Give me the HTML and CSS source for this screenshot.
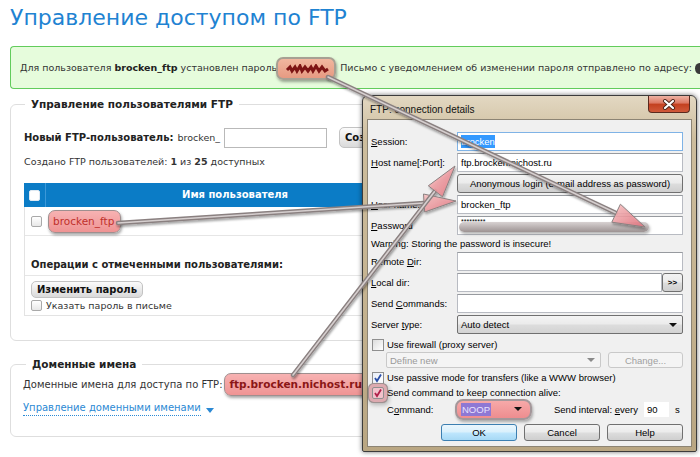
FILE: index.html
```html
<!DOCTYPE html>
<html>
<head>
<meta charset="utf-8">
<link rel="stylesheet" href="styles.css">
</head>
<body>
<div class="page">
  <h1 class="title">Управление доступом по FTP</h1>

  <div class="notice">Для пользователя <b>brocken_ftp</b> установлен пароль <span class="redact"><svg width="46" height="10" viewBox="0 0 46 10"><path d="M2 6 L5 3 L7 7 L10 3 L12 7 L15 2 L17 7 L20 3 L23 7 L26 3 L28 7 L31 2 L34 7 L37 3 L40 7 L43 5"/></svg></span> Письмо с уведомлением об изменении пароля отправлено по адресу: <span class="blob"></span></div>

  <fieldset class="box users">
    <legend>Управление пользователями FTP</legend>
    <div class="newuser">
      <b>Новый FTP-пользователь:</b><span class="prefix">brocken_</span><input class="txt" type="text"><button class="btn add">Создать</button>
    </div>
    <div class="count">Создано FTP пользователей: <b>1</b> из <b>25</b> доступных</div>
    <div class="grid">
      <div class="grid-head">
        <span class="cell-chk"><span class="cb"></span></span>
        <span class="cell-name">Имя пользователя</span>
      </div>
      <div class="grid-row">
        <span class="cell-chk"><span class="cb"></span></span>
        <span class="mark">brocken_ftp</span>
      </div>
      <div class="ops-title">Операции с отмеченными пользователями:</div>
      <div class="ops">
        <button class="btn">Изменить пароль</button>
        <label class="chk-line"><span class="cb"></span>Указать пароль в письме</label>
      </div>
    </div>
  </fieldset>

  <fieldset class="box domains">
    <legend>Доменные имена</legend>
    <div class="dom-line">Доменные имена для доступа по FTP:<span class="mark strong">ftp.brocken.nichost.ru</span></div>
    <div class="dom-link"><a class="dotted">Управление доменными именами</a><span class="caret"></span></div>
  </fieldset>

  <!-- putty-like dialog pasted over the page -->
  <div class="win">
    <div class="win-bar">
      <span class="win-title">FTP: connection details</span>
      <span class="close"><svg width="14" height="11" viewBox="0 0 14 11"><path d="M3 2 L11 9 M11 2 L3 9" stroke="#4b2318" stroke-width="4" stroke-linecap="round"/><path d="M3 2 L11 9 M11 2 L3 9" stroke="#fff" stroke-width="2.2" stroke-linecap="round"/></svg></span>
    </div>
    <div class="win-body">
      <div class="f-row"><span class="f-lbl"><u>S</u>ession:</span><span class="f-in focus"><span class="hl">brocken</span></span></div>
      <div class="f-row"><span class="f-lbl"><u>H</u>ost name[:Port]:</span><span class="f-in">ftp.brocken.nichost.ru</span></div>
      <div class="f-row"><span class="f-lbl"></span><span class="w-btn wide">Anonymous login (e-mail address as password)</span></div>
      <div class="f-row"><span class="f-lbl"><u>U</u>ser name:</span><span class="f-in">brocken_ftp</span></div>
      <div class="f-row"><span class="f-lbl"><u>P</u>assword</span><span class="f-in pass"><span class="stars">*********</span><span class="smudge"></span></span></div>
      <div class="warn">Warning: Storing the password is insecure!</div>
      <div class="f-row"><span class="f-lbl">Remote <u>D</u>ir:</span><span class="f-in"></span></div>
      <div class="f-row"><span class="f-lbl"><u>L</u>ocal dir:</span><span class="f-in"></span><span class="w-btn more">&gt;&gt;</span></div>
      <div class="f-row"><span class="f-lbl">Send <u>C</u>ommands:</span><span class="f-in"></span></div>
      <div class="f-row"><span class="f-lbl">Server <u>t</u>ype:</span><span class="f-sel">Auto detect<span class="dd"></span></span></div>
      <div class="cb-row fw"><span class="wcb"></span>Use firewall (proxy server)</div>
      <div class="sub-row">
        <span class="f-sel off">Define new<span class="dd"></span></span>
        <span class="w-btn off">Change...</span>
      </div>
      <div class="cb-row passive"><span class="wcb on"><svg width="10" height="10" viewBox="0 0 10 10"><path d="M2 5 L4 8 L8 1.5" fill="none" stroke="#2b4fa8" stroke-width="1.8"/></svg></span>Use passive mode for transfers (like a WWW browser)</div>
      <div class="cb-row"><span class="wcb on ring"><svg width="10" height="10" viewBox="0 0 10 10"><path d="M2 5 L4 8 L8 1.5" fill="none" stroke="#b0204a" stroke-width="1.8"/></svg></span>Send command to keep connection alive:</div>
      <div class="cmd-row">
        <span class="cmd-lbl">C<u>o</u>mmand:</span>
        <span class="noop"><span class="hl2">NOOP</span><span class="dd"></span></span>
        <span class="every">Send interval: <u>e</u>very</span>
        <span class="f-in num">90</span>
        <span class="unit">s</span>
      </div>
      <div class="btn-row">
        <span class="w-btn def">OK</span>
        <span class="w-btn">Cancel</span>
        <span class="w-btn">Help</span>
      </div>
    </div>
  </div>

  <svg class="notes" width="700" height="457" viewBox="0 0 700 457">
    <defs>
      <filter id="sh" x="-20%" y="-20%" width="140%" height="140%">
        <feDropShadow dx="1" dy="2" stdDeviation="1.3" flood-color="#000" flood-opacity="0.35"/>
      </filter>
      <linearGradient id="pink" x1="0" y1="0" x2="1" y2="1">
        <stop offset="0" stop-color="#f9c4c4"/>
        <stop offset="1" stop-color="#e5707c"/>
      </linearGradient>
    </defs>
    <g filter="url(#sh)">
      <line class="ln" x1="328" y1="77" x2="616" y2="213"/>
      <line class="ln-in" x1="328" y1="77" x2="616" y2="213"/>
      <polygon class="head" points="645,227 611.8,222.2 620.4,204.2"/>

      <line class="ln" x1="118" y1="223" x2="424" y2="203"/>
      <line class="ln-in" x1="118" y1="223" x2="424" y2="203"/>
      <polygon class="head" points="456,201 424.7,212 423.5,194"/>

      <line class="ln" x1="293" y1="375" x2="435" y2="191"/>
      <line class="ln-in" x1="293" y1="375" x2="435" y2="191"/>
      <polygon class="head" points="455,166 442.5,196.8 428.3,185.8"/>
    </g>
  </svg>
</div>
</body>
</html>
```

FILE: styles.css
```css
*{
    box-sizing: border-box;
}
html, body{
    margin: 0;
}
body{
    width: 700px;
    height: 457px;
    overflow: hidden;
    background: #ffffff;
    font-family: "DejaVu Sans", Verdana, sans-serif;
    font-size: 10px;
    color: #333333;
}
.page{
    position: relative;
    width: 700px;
    height: 457px;
    overflow: hidden;
    padding-left: 10px;
}
.title{
    margin: 0;
    padding-top: 3px;
    font-size: 22px;
    line-height: 30px;
    font-weight: normal;
    color: #1f83d2;
}
.notice{
    margin-top: 13px;
    width: 690px;
    height: 43px;
    line-height: 41px;
    padding: 0 0 0 9px;
    font-size: 9.5px;
    white-space: nowrap;
    overflow: hidden;
    background: #e6fcdc;
    border: 1px solid #62cc5c;
    border-right: none;
    border-radius: 4px 0 0 4px;
}
.notice b{
    color: #222;
}
.redact{
    display: inline-block;
    vertical-align: middle;
    width: 60px;
    height: 23px;
    margin: 0 1px 0 -4px;
    padding: 5px 0 0 7px;
    line-height: 10px;
    background: linear-gradient(#f1b79f, #e69a82);
    border: 2px solid #a7a093;
    border-radius: 7px;
    box-shadow: 1px 2px 3px rgba(0,0,0,.35);
}
.redact path{
    fill: none;
    stroke: #7d1414;
    stroke-width: 3;
}
.blob{
    display: inline-block;
    vertical-align: middle;
    width: 9px;
    height: 11px;
    border-radius: 50%;
    background: #3a3a3a;
}

/* fieldsets */
.box{
    margin: 0;
    width: 680px;
    min-inline-size: 0;
    border: 1px solid #dedede;
    border-radius: 6px;
}
.box legend{
    padding: 0 6px;
    font-size: 10.5px;
    line-height: 14px;
    font-weight: bold;
    color: #222222;
}
.users{
    margin-top: 8px;
    padding: 16px 0 24px 13px;
}
.users legend{
    margin-left: 1px;
}
.domains{
    margin-top: 16px;
    padding: 0 0 20px 12px;
}
.domains legend{
    margin-left: 3px;
}
.newuser{
    display: flex;
    align-items: center;
    height: 21px;
}
.newuser b{
    color: #222;
}
.prefix{
    margin-left: 4px;
    font-size: 9.5px;
}
.txt{
    width: 103px;
    height: 20px;
    margin: 0 0 0 4px;
    border: 1px solid #b9b9b9;
}
.btn{
    height: 17px;
    padding: 0 5px;
    font-family: inherit;
    font-size: 10px;
    font-weight: bold;
    color: #111;
    background: linear-gradient(#fbfbfb, #dadada);
    border: 1px solid #c3c3c3;
    border-radius: 5px;
}
.add{
    height: 21px;
    margin-left: 12px;
}
.count{
    margin-top: 7px;
    line-height: 14px;
    font-size: 9.5px;
}
.grid{
    width: 400px;
    margin-top: 14px;
    border: 1px solid #e3e3e3;
}
.grid-head{
    display: flex;
    height: 24px;
    margin: -1px -1px 0;
    background: #0b7cc6;
    color: #ffffff;
    font-weight: bold;
}
.cell-chk{
    display: flex;
    align-items: center;
    justify-content: center;
    width: 22px;
    flex: none;
}
.grid-head .cell-chk{
    border-right: 1px solid #3b98d8;
}
.cell-name{
    flex: 1;
    text-align: center;
    line-height: 24px;
}
.cb{
    display: inline-block;
    width: 11px;
    height: 11px;
    border: 1px solid #a9a9a9;
    border-radius: 2px;
    background: linear-gradient(#ffffff, #e8e8e8);
}
.grid-head .cb{
    background: #ffffff;
    border-color: #dfe9f2;
}
.grid-row{
    display: flex;
    align-items: center;
    height: 29px;
    border-bottom: 1px solid #e6e6e6;
}
.mark{
    display: inline-block;
    height: 23px;
    line-height: 21px;
    padding: 0 6px 0 4px;
    margin-left: 1px;
    font-size: 10.5px;
    color: #c0302b;
    background: linear-gradient(#f7b2b2, #ef9494);
    border: 1px solid #9f8f8f;
    border-radius: 7px;
    box-shadow: 1px 2px 3px rgba(0,0,0,.35);
}
.ops-title{
    padding: 22px 6px 3px;
    line-height: 14px;
    font-weight: bold;
    color: #222;
    border-bottom: 1px solid #e6e6e6;
}
.ops{
    padding: 5px 6px 3px;
}
.ops .btn{
    display: block;
}
.chk-line{
    display: flex;
    align-items: center;
    gap: 4px;
    height: 14px;
    font-size: 9.5px;
}
.dom-line{
    display: flex;
    align-items: center;
    height: 23px;
    margin-top: 2px;
}
.mark.strong{
    margin-left: 1px;
    padding: 0 6px 0 5px;
    font-size: 10.5px;
    font-weight: bold;
    color: #8b1616;
}
.dom-link{
    display: flex;
    align-items: center;
    margin-top: 5px;
    line-height: 14px;
}
.dotted{
    color: #2b89d4;
    border-bottom: 1px dotted #2b89d4;
}
.caret{
    width: 0;
    height: 0;
    margin: 3px 0 0 5px;
    border-left: 4px solid transparent;
    border-right: 4px solid transparent;
    border-top: 5px solid #2b89d4;
}

/* dialog */
.win{
    position: absolute;
    left: 362px;
    top: 95px;
    width: 335px;
    height: 357px;
    display: flex;
    flex-direction: column;
    font-family: "Liberation Sans", Arial, sans-serif;
    font-size: 9.5px;
    color: #000;
    background: linear-gradient(#e3d8c2, #cdbd9d 12%, #c4b28f 60%, #b9a682);
    border: 1px solid #3c3c3c;
    border-radius: 6px 6px 2px 2px;
    box-shadow: 0 0 5px rgba(0,0,0,.55);
}
.win-bar{
    display: flex;
    height: 23px;
    flex: none;
    padding-left: 7px;
}
.win-title{
    padding-top: 7px;
    font-size: 10px;
    line-height: 14px;
    color: #111;
}
.close{
    display: flex;
    align-items: center;
    justify-content: center;
    width: 42px;
    height: 17px;
    margin-left: auto;
    margin-right: 6px;
    background: linear-gradient(#eeb2a3, #dc7761 45%, #c3401f 50%, #d0593a);
    border: 1px solid #5a2a1e;
    border-top: none;
    border-radius: 0 0 4px 4px;
}
.win-body{
    flex: 1;
    margin: 0 4px 4px;
    padding: 12px 8px 3px 3px;
    background: #f0f0f0;
    border: 1px solid #8c8474;
}
.f-row{
    display: flex;
    align-items: center;
    height: 19px;
    margin-bottom: 2px;
}
.f-lbl{
    width: 86px;
    flex: none;
    white-space: nowrap;
}
.f-in{
    position: relative;
    flex: 1;
    height: 19px;
    padding: 0 3px;
    line-height: 17px;
    white-space: nowrap;
    background: #ffffff;
    border: 1px solid #b8bbc2;
    border-top-color: #979a9f;
}
.f-in.focus{
    border-color: #7fb3e6;
}
.hl{
    background: #3399ff;
    color: #ffffff;
    padding: 1px 0;
}
.stars{
    font-size: 7px;
    line-height: 9px;
    vertical-align: top;
}
.smudge{
    position: absolute;
    left: 1px;
    top: 5px;
    width: 190px;
    height: 10px;
    border-radius: 5px;
    background: linear-gradient(#d8d2d2, #9d9393);
    box-shadow: 1px 2px 3px rgba(0,0,0,.3);
}
.w-btn{
    display: flex;
    align-items: center;
    justify-content: center;
    height: 19px;
    white-space: nowrap;
    background: linear-gradient(#f3f3f3, #ebebeb 48%, #dddddd 52%, #cfcfcf);
    border: 1px solid #707070;
    border-radius: 3px;
}
.w-btn.wide{
    flex: 1;
}
.w-btn.more{
    width: 21px;
    flex: none;
    font-size: 8px;
    font-weight: bold;
}
.warn{
    height: 13px;
    line-height: 13px;
    margin-bottom: 2px;
}
.f-sel{
    flex: 1;
    display: flex;
    align-items: center;
    justify-content: space-between;
    height: 19px;
    padding: 0 5px 0 3px;
    background: linear-gradient(#f4f4f4, #ebebeb 48%, #dddddd 52%, #d3d3d3);
    border: 1px solid #707070;
    border-radius: 2px;
}
.dd{
    width: 0;
    height: 0;
    border-left: 4px solid transparent;
    border-right: 4px solid transparent;
    border-top: 4px solid #111;
}
.cb-row{
    display: flex;
    align-items: center;
    gap: 3px;
    height: 15px;
    padding-left: 1px;
    white-space: nowrap;
}
.cb-row.fw{
    margin-top: 3px;
}
.cb-row.passive{
    margin-top: 2px;
}
.wcb{
    display: flex;
    align-items: center;
    justify-content: center;
    width: 12px;
    height: 12px;
    flex: none;
    background: linear-gradient(135deg, #dcdcdc, #ffffff);
    border: 1px solid #8f8f8f;
}
.wcb.on{
    background: linear-gradient(135deg, #e8eef8, #ffffff);
}
.wcb.ring{
    background: #f2c2cb;
    border-radius: 2px;
    box-shadow: 0 0 0 3px #ddaab0, 0 0 0 4px #9e9090, 1px 2px 4px 4px rgba(0,0,0,.25);
}
.sub-row{
    display: flex;
    gap: 7px;
    height: 16px;
    padding-left: 15px;
}
.sub-row .f-sel{
    height: 16px;
    color: #9a9a9a;
    background: #f4f4f4;
    border-color: #c9c9c9;
}
.sub-row .dd{
    border-top-color: #8a8a8a;
}
.sub-row .w-btn{
    width: 75px;
    height: 16px;
    color: #a0a0a0;
    background: #f4f4f4;
    border-color: #c9c9c9;
}
.cmd-row{
    display: flex;
    align-items: center;
    height: 18px;
    padding-left: 16px;
    white-space: nowrap;
}
.cmd-lbl{
    width: 68px;
}
.noop{
    display: flex;
    align-items: center;
    justify-content: space-between;
    width: 77px;
    height: 21px;
    padding: 0 8px 0 4px;
    background: linear-gradient(#f6a9a9, #ee8d8f);
    border: 2px solid #a4979a;
    border-radius: 8px;
    box-shadow: 1px 2px 3px rgba(0,0,0,.3);
}
.hl2{
    padding: 1px 1px;
    background: #8e78d4;
    color: #e9e2ff;
}
.every{
    margin-left: 22px;
}
.f-in.num{
    flex: none;
    width: 27px;
    height: 17px;
    margin-left: 5px;
    line-height: 15px;
    border-color: #f0f0f0;
}
.unit{
    margin-left: 5px;
}
.btn-row{
    display: flex;
    justify-content: flex-end;
    gap: 7px;
    margin-top: 6px;
}
.btn-row .w-btn{
    width: 76px;
    height: 17px;
}
.w-btn.def{
    border-color: #3c7fb1;
    background: linear-gradient(#eaf6fd, #d9f0fc 48%, #bee6fd 52%, #a7d9f5);
}
.notes{
    position: absolute;
    left: 0;
    top: 0;
    pointer-events: none;
}
.ln{
    stroke: #8a8080;
    stroke-width: 4.5;
    stroke-linecap: round;
}
.ln-in{
    stroke: #d6cfcf;
    stroke-width: 1.6;
    stroke-linecap: round;
}
.head{
    fill: url(#pink);
    fill-opacity: .85;
    stroke: #8a8080;
    stroke-width: 1;
}
```
